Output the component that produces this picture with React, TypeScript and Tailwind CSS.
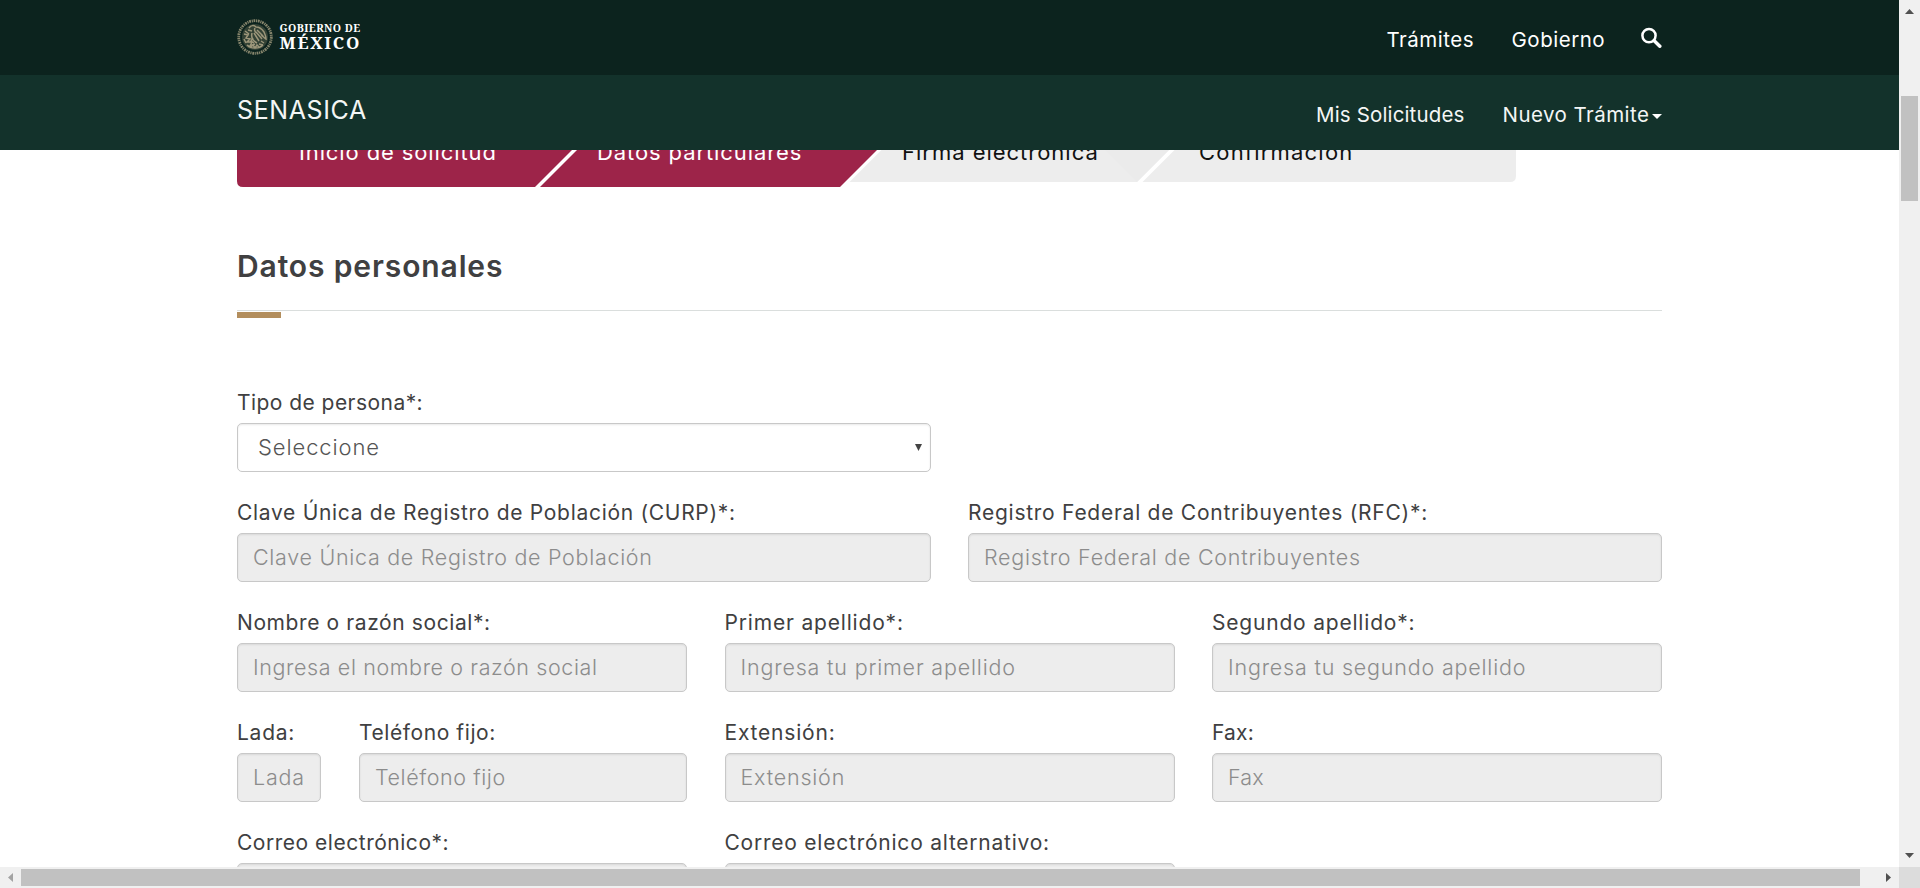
import { ReactNode } from "react";

function Seal() {
  return (
    <svg className="h-9 w-9" viewBox="0 0 36 36" fill="none" stroke="#9c967a">
      <circle cx="18" cy="18" r="16.3" strokeWidth="2.8" strokeDasharray="1.8 0.8 1.1 0.7" opacity="0.85" />
      <circle cx="18" cy="18" r="13" fill="#8f8a6d" stroke="none" opacity="0.3" />
      <path d="M12 9c2-3 5-3 7-1 3 0 6 2 8 5 1 2 2 4 2 7-2-1-3-3-5-4M18 9c-1 2 0 4 2 5M11 11l4 1M20 11l6 6M19 13l6 7M17 14l5 8M15 14c-1 4 1 8 5 10" strokeWidth="1.5" />
      <path d="M7 15l4 1-2 3 4 1-3 3 5 0-2 4 5-2M8 12l4 3M7 20l2 4M10 26c4 4 12 4 16 0M14 28l2-2 2 3 2-3 2 2M16 19l-2 3 3 2" strokeWidth="1.5" />
      <path d="M24 22l3 2M22 25l4 1" strokeWidth="1.3" />
    </svg>
  );
}

function Logo() {
  return (
    <div className="flex h-9 items-start">
      <Seal />
      <div className="ml-[6.5px] flex flex-col font-['Noto_Serif','DejaVu_Serif',serif] font-bold text-white">
        <span className="mt-[3px] h-[13px] text-[10.5px] leading-[13px] tracking-[0.44px]">GOBIERNO DE</span>
        <span className="h-[17px] text-[17px] leading-[16px] tracking-[1.7px]">MÉXICO</span>
      </div>
    </div>
  );
}

function SearchIcon() {
  return (
    <svg className="h-[21px] w-[21px]" viewBox="0 0 21 21" fill="none" stroke="#fff">
      <circle cx="8" cy="8.6" r="6.6" strokeWidth="2.5" />
      <path d="M13.2 13.8l5.6 5.4" strokeWidth="3.5" strokeLinecap="round" />
    </svg>
  );
}

function Steps() {
  return (
    <div className="relative h-[37px] w-[1279px]">
      <svg className="absolute inset-0 h-[37px] w-[1279px]" viewBox="0 0 1279 37">
        <path d="M0 0H335L298 37H6Q0 37 0 31Z" fill="#9d2449" />
        <path d="M340 0H640L603 37H303Z" fill="#9d2449" />
        <path d="M644.5 0H932L900 32H612.5Z" fill="#ededed" />
        <path d="M868 0H932L900 32Z" fill="#ebebeb" />
        <path d="M937.5 0H1279V26Q1279 32 1273 32H905.5Z" fill="#ededed" />
      </svg>
      <div className="absolute inset-0 overflow-hidden text-[22px] leading-[28px]">
        <div className="-mt-[12px] flex whitespace-nowrap">
          <span className="ml-[62px] w-[298px] tracking-[0.88px] text-white">Inicio de solicitud</span>
          <span className="w-[305px] tracking-[0.9px] text-white">Datos particulares</span>
          <span className="w-[297px] tracking-[0.98px] text-[#111]">Firma electrónica</span>
          <span className="tracking-[1.2px] text-[#111]">Confirmación</span>
        </div>
      </div>
    </div>
  );
}

function Field({ label, className, children }: { label: string; className: string; children: ReactNode }) {
  return (
    <div className={`h-[110px] shrink-0 whitespace-nowrap ${className}`}>
      <div className="h-[33px] text-[21px] leading-[25px] text-[#404041]">{label}</div>
      {children}
    </div>
  );
}

const box = "flex h-[49px] items-center rounded-[5px] border border-[#c8c8c8] shadow-[inset_0_1px_2px_rgba(0,0,0,0.09)]";

function Disabled({ text }: { text: string }) {
  return <div className={`${box} overflow-hidden bg-[#ededed] pl-[15px] text-[21.5px] font-light text-[#8c8c8c]`}>{text}</div>;
}

function Content() {
  return (
    <main className="mx-auto w-[1425px]">
      <Steps />
      <h1 className="mt-[61px] text-[30px] leading-[36px] font-semibold tracking-[0.88px] text-[#404041]">Datos personales</h1>
      <div className="mt-[26px] h-px bg-[#dadedd]" />
      <div className="mt-px h-[6px] w-11 bg-[#b38e5d]" />

      <div className="mt-[72px] flex">
        <Field label="Tipo de persona*:" className="w-[694px] tracking-[0.45px]">
          <div className={`${box} justify-between bg-white pr-[8px] pl-5 text-[22px] font-light tracking-[0.9px] text-[#555]`}>
            Seleccione
            <svg className="h-[7px] w-[7px]" viewBox="0 0 7 7"><path d="M0 0H7L3.5 7Z" fill="#444" /></svg>
          </div>
        </Field>
      </div>

      <div className="flex gap-[37px]">
        <Field label="Clave Única de Registro de Población (CURP)*:" className="w-[694px] tracking-[0.7px]">
          <Disabled text="Clave Única de Registro de Población" />
        </Field>
        <Field label="Registro Federal de Contribuyentes (RFC)*:" className="w-[694px] tracking-[0.74px]">
          <Disabled text="Registro Federal de Contribuyentes" />
        </Field>
      </div>

      <div className="flex justify-between">
        <Field label="Nombre o razón social*:" className="w-[450px] tracking-[0.6px]">
          <Disabled text="Ingresa el nombre o razón social" />
        </Field>
        <Field label="Primer apellido*:" className="w-[450px] tracking-[0.82px]">
          <Disabled text="Ingresa tu primer apellido" />
        </Field>
        <Field label="Segundo apellido*:" className="w-[450px] tracking-[0.8px]">
          <Disabled text="Ingresa tu segundo apellido" />
        </Field>
      </div>

      <div className="flex justify-between">
        <div className="flex w-[450px] justify-between">
          <Field label="Lada:" className="w-[84px] tracking-[0.75px]">
            <Disabled text="Lada" />
          </Field>
          <Field label="Teléfono fijo:" className="w-[328px] tracking-[0.58px]">
            <Disabled text="Teléfono fijo" />
          </Field>
        </div>
        <Field label="Extensión:" className="w-[450px] tracking-[0.8px]">
          <Disabled text="Extensión" />
        </Field>
        <Field label="Fax:" className="w-[450px] tracking-[0.2px]">
          <Disabled text="Fax" />
        </Field>
      </div>

      <div className="flex gap-[37.5px]">
        <Field label="Correo electrónico*:" className="w-[450px] tracking-[0.52px]">
          <Disabled text="" />
        </Field>
        <Field label="Correo electrónico alternativo:" className="w-[450px] tracking-[0.77px]">
          <Disabled text="" />
        </Field>
      </div>
    </main>
  );
}

export default function App() {
  return (
    <div className="flex h-[888px] w-[1920px] flex-col overflow-hidden bg-white font-['Inter',sans-serif]">
      <div className="flex h-[867px]">
        <div className="flex w-[1899px] flex-col">
          <header className="shrink-0 whitespace-nowrap text-white">
            <div className="h-[75px] bg-[#0c231e]">
              <div className="mx-auto flex w-[1425px] justify-between">
                <div className="pt-[19px]"><Logo /></div>
                <nav className="flex text-[20.5px] leading-[24px]">
                  <span className="mt-[28px] w-[125px] tracking-[0.52px]">Trámites</span>
                  <span className="mt-[28px] w-[129.5px] tracking-[0.52px]">Gobierno</span>
                  <span className="mt-[27px]"><SearchIcon /></span>
                </nav>
              </div>
            </div>
            <div className="h-[75px] bg-[#13322b]">
              <div className="mx-auto flex w-[1425px] justify-between">
                <span className="mt-[20px] text-[25px] leading-[30px] tracking-[0.6px] text-[#f4f6f5]">SENASICA</span>
                <nav className="mt-[28px] flex text-[20.5px] leading-[24px] text-[#f4f6f5]">
                  <span className="w-[186.5px] tracking-[0.15px]">Mis Solicitudes</span>
                  <span className="w-[149.5px] tracking-[0.45px]">Nuevo Trámite</span>
                  <svg className="mt-[11px] h-[5px] w-[10px]" viewBox="0 0 10 5"><path d="M0 0H10L5 5Z" fill="#fff" /></svg>
                </nav>
              </div>
            </div>
          </header>
          <div className="min-h-0 flex-1 overflow-hidden"><Content /></div>
        </div>
        <div className="flex w-[21px] flex-col items-center bg-[#f0f0f0]">
          <svg className="mt-[9px] h-[5px] w-[9px]" viewBox="0 0 9 5"><path d="M0 5L4.5 0L9 5Z" fill="#505050" /></svg>
          <div className="mt-[82px] h-[105px] w-[17px] bg-[#c1c1c1]" />
          <svg className="mt-auto mb-[9px] h-[5px] w-[9px]" viewBox="0 0 9 5"><path d="M0 0H9L4.5 5Z" fill="#505050" /></svg>
        </div>
      </div>
      <div className="flex h-[21px] items-center bg-[#f0f0f0]">
        <svg className="ml-[8px] h-[9px] w-[5px]" viewBox="0 0 5 9"><path d="M5 0V9L0 4.5Z" fill="#a3a3a3" /></svg>
        <div className="ml-[8px] h-[17px] w-[1839px] bg-[#c1c1c1]" />
        <svg className="ml-[26px] h-[9px] w-[5px]" viewBox="0 0 5 9"><path d="M0 0V9L5 4.5Z" fill="#505050" /></svg>
        <div className="ml-auto h-[21px] w-[21px] bg-[#dcdcdc]" />
      </div>
    </div>
  );
}
